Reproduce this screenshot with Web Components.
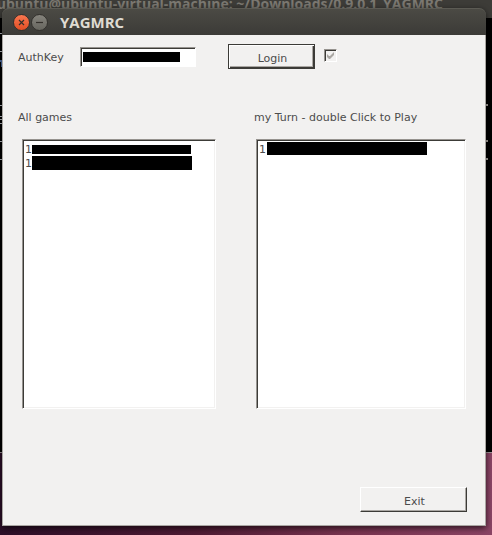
<!DOCTYPE html>
<html lang="en">
<head>
<meta charset="utf-8">
<title>YAGMRC</title>
<style>
  html, body { height: 100%; margin: 0; }
  body { font: 11px/14px "DejaVu Sans", sans-serif; color: #4c4c4c; overflow: hidden; }
</style>
</head>
<body>
<desk-top>
  <terminal-window slot="back" caption="ubuntu@ubuntu-virtual-machine: ~/Downloads/0.9.0.1_YAGMRC"></terminal-window>
  <app-window caption="YAGMRC">
    <login-bar></login-bar>
    <game-columns>
      <game-list caption="All games">
        <game-entry class="thin">1</game-entry>
        <game-entry>1</game-entry>
      </game-list>
      <game-list caption="my Turn - double Click to Play" class="turn">
        <game-entry class="high">1</game-entry>
      </game-list>
    </game-columns>
    <bevel-button slot="footer" class="exit">Exit</bevel-button>
  </app-window>
</desk-top>
<script>
const define = (name, html, setup) => customElements.define(name, class extends HTMLElement {
  connectedCallback() {
    if (this.shadowRoot) return;
    const t = document.createElement('template');
    t.innerHTML = html;
    this.attachShadow({ mode: 'open' }).append(t.content.cloneNode(true));
    if (setup) setup(this, this.shadowRoot);
  }
});
const caption = (host, root) => {
  root.querySelector('.caption').textContent = host.getAttribute('caption');
};

define('desk-top', `
<style>
  :host { display: flex; position: relative; min-height: 100vh; box-sizing: border-box; padding: 8px 6px 9px 2px; overflow: hidden;
    background: linear-gradient(90deg, #2d0f29, #4f1b34 40%, #78334f 70%, #8b4465); }
  ::slotted(app-window) { flex: 1; position: relative; min-width: 0; }
</style>
<slot name="back"></slot><slot></slot>`);

define('terminal-window', `
<style>
  :host { position: absolute; inset: 0 0 82px 0; display: flex; flex-direction: column; background: #000; border-bottom: 1px solid #a2969b; }
  header { flex: none; height: 18px; display: flex; justify-content: flex-end; box-sizing: border-box; padding-right: 49px;
    background: #3d3c38; color: #7b7871; font: bold 14px/18px "Open Sans", sans-serif; white-space: nowrap; }
  .caption { margin-top: -5px; }
  .screen { flex: 1; display: flex; justify-content: space-between; }
</style>
<header><span class="caption"></span></header>
<div class="screen" aria-hidden="true">
  <svg width="2" height="150"><g fill="#c5c9d0"><path d="M0 15h2v1H0zM0 33h2v1H0zM0 87h2v1H0zM0 98h2v1H0zM0 101h2v1H0zM0 105h2v1H0zM0 123h2v1H0zM0 141h2v1H0z"/></g><path fill="#5273ac" d="M0 42h2v2H0zM1 44h1v5H1z"/></svg>
  <svg width="6" height="150"><path fill="#b0aaa5" d="M0 86h2v2H0zM0 122h2v2H0zM0 140h2v2H0z"/></svg>
</div>`, caption);

define('app-window', `
<style>
  :host { display: flex; flex-direction: column; border-radius: 7px 7px 0 0; box-shadow: 0 2px 6px rgba(0,0,0,.7); }
  header { flex: none; height: 27px; box-sizing: border-box; display: flex; align-items: center; gap: 1px; padding-left: 11px;
    border-top: 1px solid #5c5b54; border-radius: 7px 7px 0 0; background: linear-gradient(#4b4a44, #3c3b37); }
  header button { width: 17px; height: 17px; padding: 0; border: 1px solid #33312d; border-radius: 50%; display: grid; place-items: center; }
  .close { background: linear-gradient(#f9764f, #e14f25); }
  .min { background: linear-gradient(#85837c, #67665f); }
  svg { display: block; fill: none; stroke: #33302b; stroke-width: 1.2; }
  h1 { margin: 0 0 1px 11px; font: bold 15px/20px "Open Sans", sans-serif; color: #dfdbd2; }
  main { flex: 1; display: flex; flex-direction: column; padding: 9px 18px 13px 15px; background: #f2f1f0;
    border: solid #aaa7a3; border-width: 0 1px 1px; }
  footer { display: flex; justify-content: flex-end; margin-top: 78px; }
</style>
<header>
  <button class="close" aria-label="Close"><svg width="9" height="9"><path d="M2 2l5 5M7 2L2 7"/></svg></button>
  <button class="min" aria-label="Minimize"><svg width="9" height="9"><path d="M1 4.5h7"/></svg></button>
  <h1 class="caption"></h1>
</header>
<main><slot></slot><footer><slot name="footer"></slot></footer></main>`, caption);

define('bevel-button', `
<style>
  :host { display: block; width: 87px; height: 25px; }
  :host(.exit) { width: 107px; }
  button { width: 100%; height: 100%; box-sizing: border-box; padding: 4px 0 0 2px; border: 1px solid; border-color: #fff #3c3b37 #3c3b37 #fff;
    background: #f2f1f0; box-shadow: inset -1px -1px #aaa7a3; font: inherit; color: inherit; }
  :host(.default) button { border-color: #3c3b37; box-shadow: inset 1px 1px #fff, inset -1px -1px #3c3b37, inset -2px -2px #aaa7a3; }
</style>
<button type="button"><slot></slot></button>`);

define('sunken-check', `
<style>
  :host { display: grid; width: 13px; height: 13px; }
  input, svg { grid-area: 1 / 1; }
  input { appearance: none; width: 13px; height: 13px; margin: 0; box-sizing: border-box; border: 1px solid; border-color: #96938f #fff #fff #96938f;
    box-shadow: inset 1px 1px #3c3b37; background: #f2f1f0; }
  svg { pointer-events: none; opacity: 0; }
  input:checked + svg { opacity: 1; }
</style>
<input type="checkbox" checked aria-label="Logged in">
<svg width="13" height="13"><path d="M3 5v3l2 2h1l4-4V3L6 7H5z" fill="#aaa7a3"/></svg>`);

define('login-bar', `
<style>
  :host { display: flex; align-items: center; height: 25px; }
  label { width: 62px; padding-top: 2px; }
  input { width: 116px; height: 20px; box-sizing: border-box; padding: 2px; border: 1px solid; border-color: #96938f #fff #fff #96938f; font: inherit; color: inherit;
    background: linear-gradient(#000, #000) 2px 4px / 97px 10px no-repeat #fff;
    box-shadow: inset 1px 1px #3c3b37; }
  bevel-button { margin-left: 32px; }
  sunken-check { margin: 0 0 3px 9px; }
</style>
<label for="key">AuthKey</label><input id="key" type="text">
<bevel-button class="default">Login</bevel-button>
<sunken-check></sunken-check>`);

define('game-columns', `
<style>
  :host { flex: 1; display: grid; grid-template-columns: 198fr 213fr; gap: 38px; margin-top: 42px; }
</style>
<slot></slot>`);

define('game-list', `
<style>
  :host { display: flex; flex-direction: column; min-width: 0; }
  h2 { margin: 0 0 14px; font: inherit; white-space: nowrap; }
  .box { flex: 1; margin-left: 4px; padding: 2px 1px; background: #fff; border: 1px solid; border-color: #96938f #fff #fff #96938f;
    box-shadow: inset 1px 1px #3c3b37, inset -1px -1px #f2f1f0; }
  :host(.turn) .box { margin: 0 1px 0 2px; }
</style>
<h2 class="caption" id="c"></h2>
<div class="box" role="listbox" aria-labelledby="c"><slot></slot></div>`, caption);

define('game-entry', `
<style>
  :host { display: flex; align-items: center; height: 14px; padding-left: 1px; }
  span { padding-top: 2px; }
  i { width: 160px; height: 14px; background: #000; }
  :host(.thin) i { width: 159px; height: 9px; }
  :host(.high) i { height: 13px; margin-left: 1px; align-self: flex-start; }
</style>
<span><slot></slot></span><i></i>`, host => host.setAttribute('role', 'option'));
</script>
</body>
</html>
